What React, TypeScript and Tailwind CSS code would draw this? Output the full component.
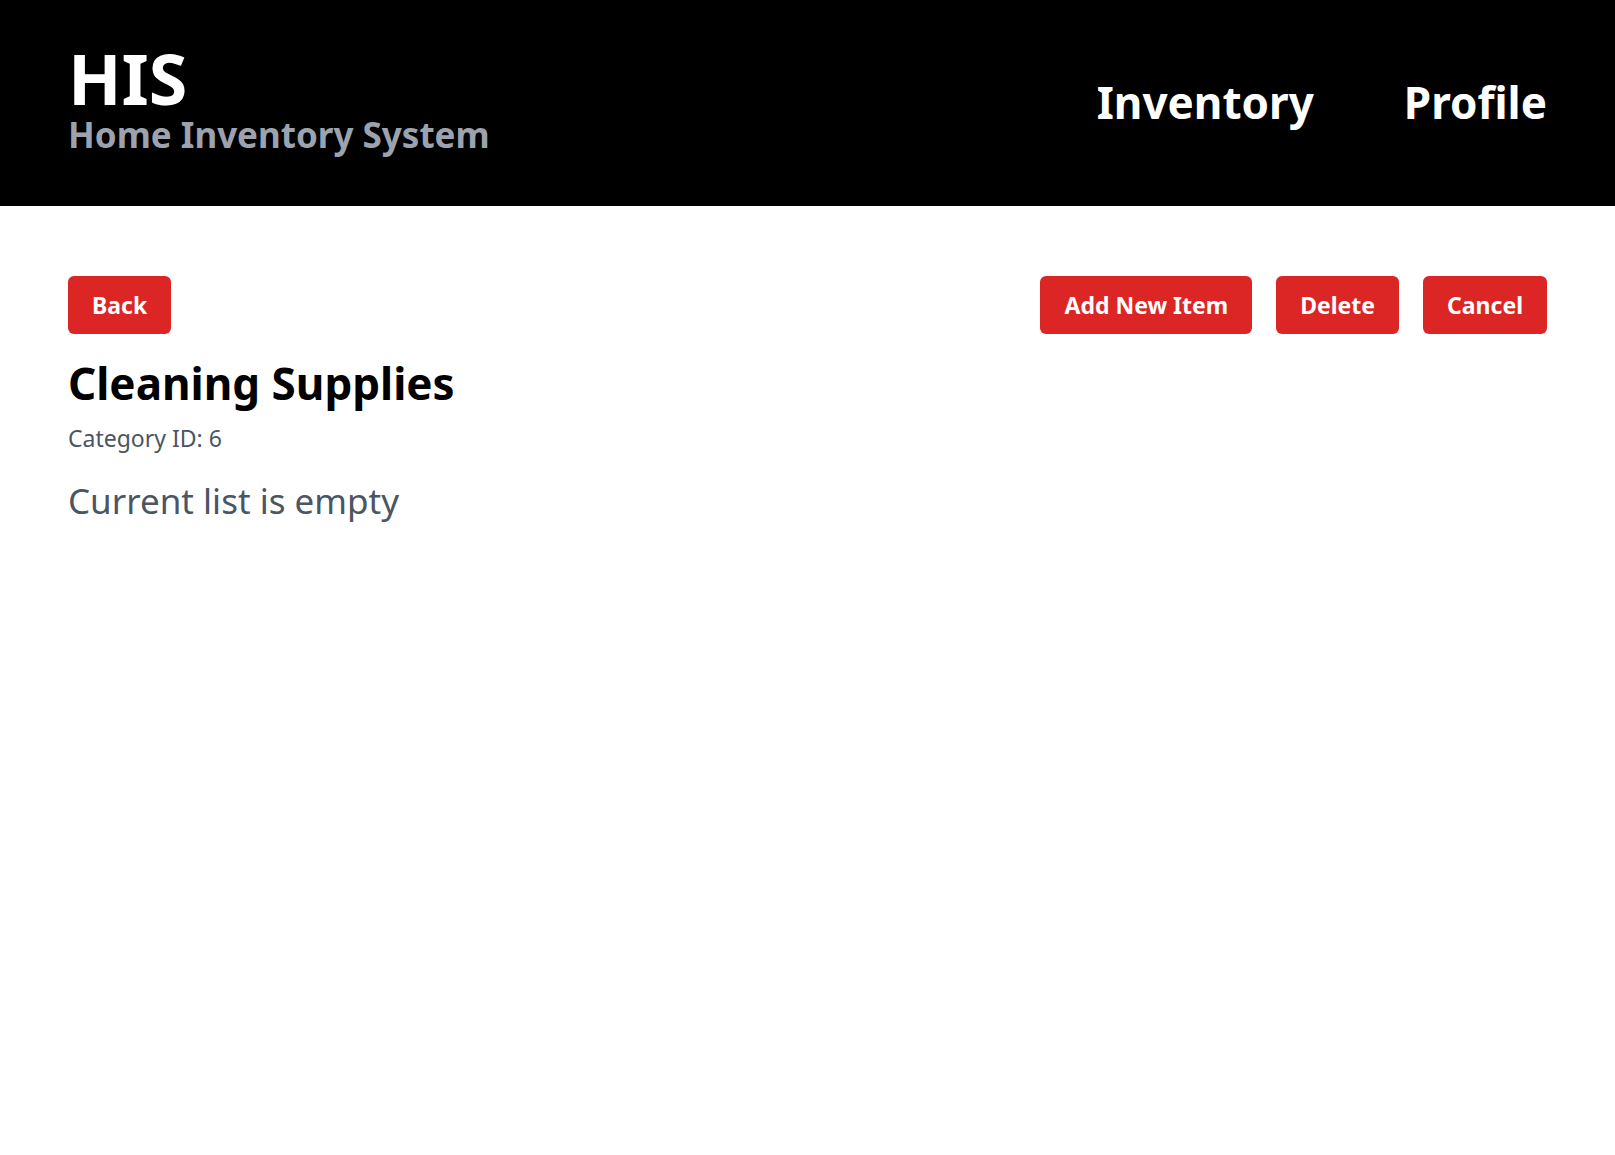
export default function App() {
  return (
    <div className="min-h-[1155px] bg-white" style={{ fontFamily: '"Noto Sans", "Open Sans", sans-serif' }}>
      {/* Header */}
      <header className="flex h-[206px] items-center justify-between bg-black px-[68px]">
        <div className="mb-[12px]">
          <h1 className="text-[70px] leading-none font-bold text-white">HIS</h1>
          <p className="mt-[4px] text-[35px] leading-none font-bold text-[#9ca3af]">Home Inventory System</p>
        </div>
        <nav className="-mt-[2px] flex items-center gap-[90px] text-[44px] leading-none font-bold text-white">
          <a href="#">Inventory</a>
          <a href="#">Profile</a>
        </nav>
      </header>

      {/* Main */}
      <main className="px-[68px] pt-[70px]">
        <div className="flex items-center justify-between">
          <button className="rounded-md bg-[#dc2626] px-6 py-[13px] text-[23px] leading-[32px] font-bold text-white">Back</button>
          <div className="flex gap-6">
            <button className="rounded-md bg-[#dc2626] px-6 py-[13px] text-[23px] leading-[32px] font-bold text-white">Add New Item</button>
            <button className="rounded-md bg-[#dc2626] px-6 py-[13px] text-[23px] leading-[32px] font-bold text-white">Delete</button>
            <button className="rounded-md bg-[#dc2626] px-6 py-[13px] text-[23px] leading-[32px] font-bold text-white">Cancel</button>
          </div>
        </div>
        <h2 className="mt-[27px] text-[44px] leading-none font-bold text-black">Cleaning Supplies</h2>
        <p className="mt-[22px] text-[23px] leading-none text-[#4b5563]">Category ID: 6</p>
        <p className="mt-[33px] text-[35px] leading-none text-[#4b5563]">Current list is empty</p>
      </main>
    </div>
  );
}
